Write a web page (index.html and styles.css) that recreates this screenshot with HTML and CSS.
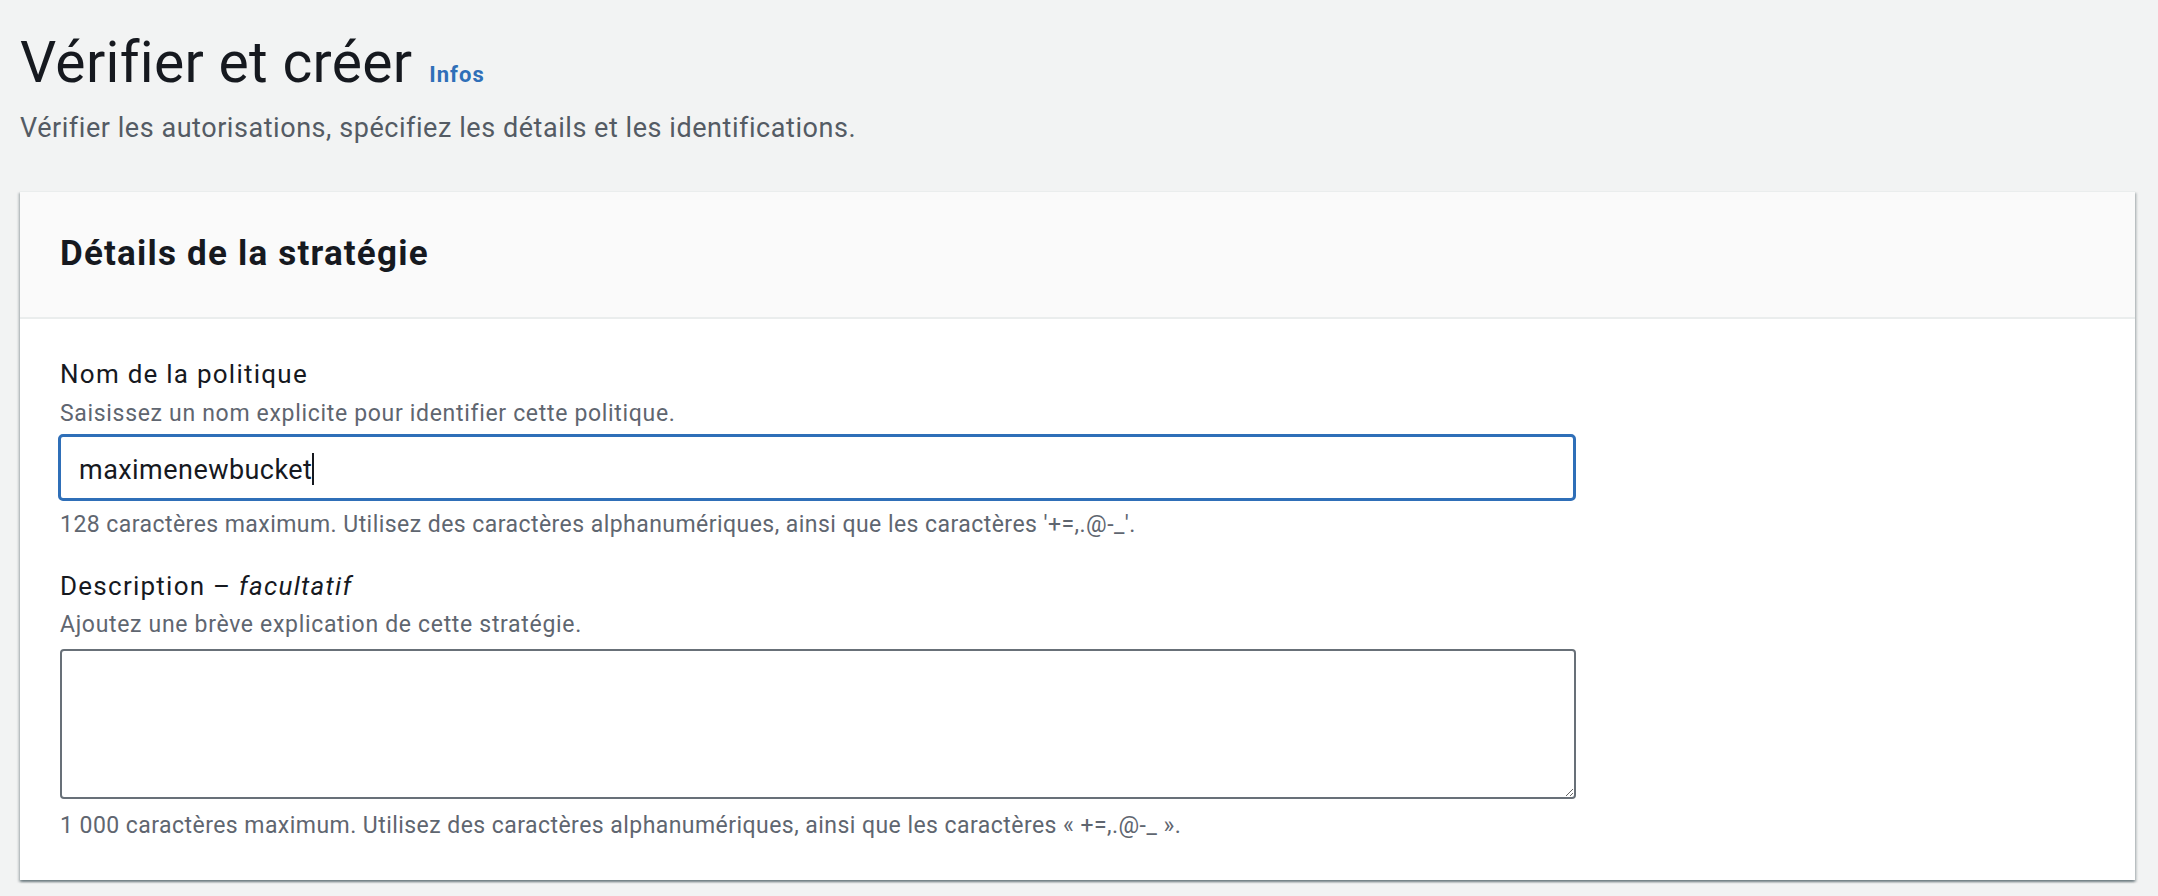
FILE: index.html
```html
<!DOCTYPE html>
<html lang="fr">
<head>
<meta charset="utf-8">
<title>Vérifier et créer</title>
<link rel="stylesheet" href="styles.css">
</head>
<body>
<main class="page">
  <header class="page-header">
    <div class="title-row">
      <h1 class="title">Vérifier et créer</h1>
      <a class="info-link" href="#">Infos</a>
    </div>
    <p class="subtitle">Vérifier les autorisations, spécifiez les détails et les identifications.</p>
  </header>

  <section class="card">
    <div class="card-header">
      <h2 class="card-title">Détails de la stratégie</h2>
    </div>
    <div class="card-body">
      <div class="field">
        <label class="field-label">Nom de la politique</label>
        <div class="field-desc">Saisissez un nom explicite pour identifier cette politique.</div>
        <div class="input input-focused"><span class="input-value">maximenewbucket</span><span class="caret"></span></div>
        <div class="field-hint">128 caractères maximum. Utilisez des caractères alphanumériques, ainsi que les caractères '+=,.@-_'.</div>
      </div>
      <div class="field field-second">
        <label class="field-label">Description – <i>facultatif</i></label>
        <div class="field-desc">Ajoutez une brève explication de cette stratégie.</div>
        <textarea class="textarea"></textarea>
        <div class="field-hint hint-after-textarea">1 000 caractères maximum. Utilisez des caractères alphanumériques, ainsi que les caractères « +=,.@-_ ».</div>
      </div>
    </div>
  </section>
</main>
</body>
</html>
```

FILE: styles.css
```css
html, body {
  margin: 0;
  padding: 0;
}
body {
  background: #f2f3f3;
  font-family: Roboto, "Noto Sans", "Liberation Sans", sans-serif;
  color: #16191f;
  width: 2158px;
  height: 896px;
  overflow: hidden;
}
.page {
  padding: 29px 23px 0 20px;
}
.title-row {
  display: flex;
  align-items: baseline;
}
.title {
  margin: 0;
  font-size: 57px;
  line-height: 68px;
  font-weight: 400;
  letter-spacing: 0.3px;
  color: #16191f;
}
.info-link {
  margin-left: 17px;
  font-size: 22px;
  font-weight: 700;
  letter-spacing: 1px;
  color: #2f6fb8;
  text-decoration: none;
}
.subtitle {
  margin: 13px 0 0 0;
  font-size: 27px;
  line-height: 36px;
  letter-spacing: 0.55px;
  color: #545b64;
}
.card {
  margin-top: 45px;
  background: #ffffff;
  box-shadow: 0 2px 2px 0 rgba(0, 28, 36, 0.35), 2px 2px 2px 0 rgba(0, 28, 36, 0.15), -2px 2px 2px 0 rgba(0, 28, 36, 0.15);
  border-top: 1px solid #eaeded;
}
.card-header {
  background: #fafafa;
  padding: 41px 40px 42px 40px;
  border-bottom: 2px solid #eaeded;
}
.card-title {
  margin: 0;
  font-size: 35px;
  line-height: 42px;
  font-weight: 700;
  letter-spacing: 1.2px;
  color: #16191f;
}
.card-body {
  padding: 39px 40px 40px 40px;
}
.field-label {
  display: block;
  font-size: 26px;
  line-height: 32px;
  letter-spacing: 1.25px;
  color: #16191f;
}
.field-desc {
  margin-top: 10px;
  font-size: 23px;
  line-height: 28px;
  letter-spacing: 0.68px;
  color: #5f6670;
}
.input {
  box-sizing: border-box;
  margin: 6px 0 0 -2px;
  width: 1518px;
  height: 67px;
  padding: 6px 0 0 18px;
  border: 3px solid #2f6fb8;
  border-radius: 5px;
  background: #ffffff;
  display: flex;
  align-items: flex-start;
  font-size: 27px;
  line-height: 55px;
  letter-spacing: 0.45px;
  color: #16191f;
}
.caret {
  display: inline-block;
  width: 2px;
  height: 32px;
  margin-top: 10px;
  background: #16191f;
}
.field-hint {
  margin-top: 10px;
  font-size: 23px;
  line-height: 28px;
  letter-spacing: 0.45px;
  color: #5f6670;
}
.field-second {
  margin-top: 31px;
}
.field-second .field-desc {
  margin-top: 9px;
}
.textarea {
  display: block;
  box-sizing: border-box;
  margin-top: 10px;
  width: 1516px;
  height: 150px;
  border: 2px solid #687078;
  border-radius: 4px;
  background: #ffffff;
  font-family: inherit;
  font-size: 27px;
  padding: 8px 18px;
  resize: vertical;
}
.hint-after-textarea {
  margin-top: 13px;
}
```
